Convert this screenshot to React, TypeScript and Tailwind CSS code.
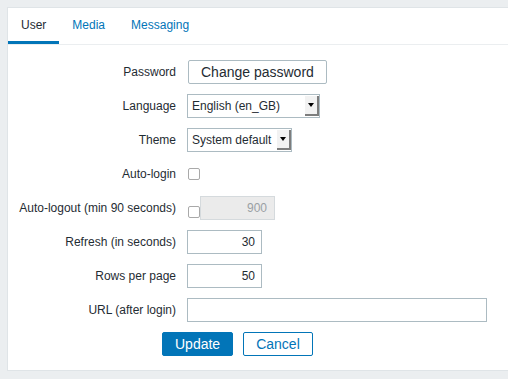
import React from 'react';

const Row: React.FC<{ label: string; children: React.ReactNode }> = ({ label, children }) => (
  <div className="flex h-[24px] items-center gap-[11px]">
    <label className="w-[168px] shrink-0 text-right">{label}</label>
    {children}
  </div>
);

const Select: React.FC<{ value: string; width: string }> = ({ value, width }) => (
  <div className={`flex h-[24px] ${width} items-stretch border border-[#acbbc2] bg-white`}>
    <span className="flex flex-1 items-center pl-[4px] whitespace-nowrap">{value}</span>
    <span className="my-[1px] flex w-[14px] items-center justify-center border-b-2 border-r-2 border-[#7d7d7d] bg-[#f2f2f2]">
      <span className="h-0 w-0 border-x-[3px] border-t-[4px] border-x-transparent border-t-black" />
    </span>
  </div>
);

const Checkbox: React.FC<{ className?: string }> = ({ className = '' }) => (
  <span className={`block h-[12px] w-[12px] rounded-[2px] border border-[#a9a9a9] bg-white ${className}`} />
);

const Tab: React.FC<{ label: string; active?: boolean }> = ({ label, active }) => (
  <div
    className={`flex h-[36px] items-center border-b-[3px] px-[13px] ${
      active ? 'border-[#0275b8] text-[#1f2c33]' : 'border-transparent text-[#0275b8]'
    }`}
  >
    {label}
  </div>
);

export default function App() {
  return (
    <div className="h-[379px] w-[508px] overflow-hidden bg-[#ebeef0] pl-[7px] pt-[7px] font-['Liberation_Sans',Arial,sans-serif] text-[12px] text-[#1f2c33]">
      <div className="h-[364px] w-[520px] border border-[#dfe4e7] bg-white">
        {/* Tabs */}
        <div className="flex border-b border-[#ebeef0]">
          <Tab label="User" active />
          <Tab label="Media" />
          <Tab label="Messaging" />
        </div>

        {/* Form */}
        <div className="flex flex-col gap-[10px] pt-[15px]">
          <Row label="Password">
            <button className="ml-[1px] h-[24px] rounded-[2px] border border-[#acbbc2] bg-white px-[12px] text-[14px] text-[#1f2c33]">
              Change password
            </button>
          </Row>
          <Row label="Language">
            <Select value="English (en_GB)" width="w-[133px]" />
          </Row>
          <Row label="Theme">
            <Select value="System default" width="w-[105px]" />
          </Row>
          <Row label="Auto-login">
            <Checkbox className="ml-[1px]" />
          </Row>
          <Row label="Auto-logout (min 90 seconds)">
            <div className="flex h-[24px] items-end">
              <Checkbox className="mb-[2px] ml-[1px]" />
              <input
                readOnly
                disabled
                defaultValue="900"
                className="h-[24px] w-[75px] border border-[#d5dadd] bg-[#ebebeb] pr-[7px] text-right text-[#9aa0a4] outline-none"
              />
            </div>
          </Row>
          <Row label="Refresh (in seconds)">
            <input
              readOnly
              defaultValue="30"
              className="h-[24px] w-[75px] border border-[#acbbc2] bg-white pr-[6px] text-right outline-none"
            />
          </Row>
          <Row label="Rows per page">
            <input
              readOnly
              defaultValue="50"
              className="h-[24px] w-[75px] border border-[#acbbc2] bg-white pr-[6px] text-right outline-none"
            />
          </Row>
          <Row label="URL (after login)">
            <input readOnly className="h-[24px] w-[300px] border border-[#acbbc2] bg-white outline-none" />
          </Row>
          <div className="ml-[154px] flex h-[24px] gap-[10px]">
            <button className="h-[24px] rounded-[2px] border border-[#0275b8] bg-[#0275b8] px-[12px] text-[14px] text-white">
              Update
            </button>
            <button className="h-[24px] rounded-[2px] border border-[#0275b8] bg-white px-[12px] text-[14px] text-[#0275b8]">
              Cancel
            </button>
          </div>
        </div>
      </div>
    </div>
  );
}
